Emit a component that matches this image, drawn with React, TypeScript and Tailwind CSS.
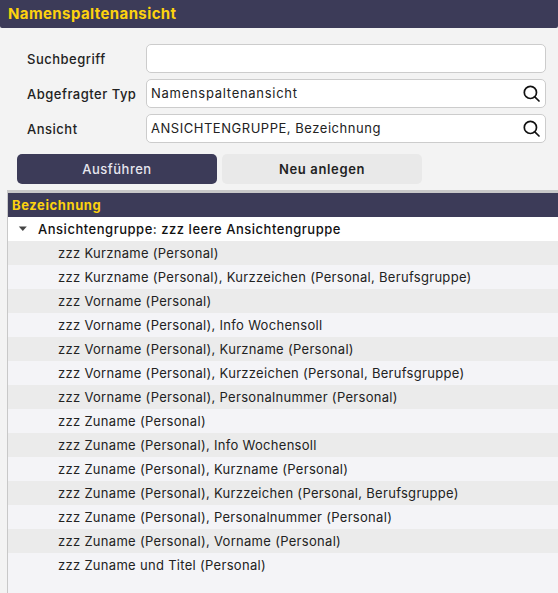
const rows = [
  "zzz Kurzname (Personal)",
  "zzz Kurzname (Personal), Kurzzeichen (Personal, Berufsgruppe)",
  "zzz Vorname (Personal)",
  "zzz Vorname (Personal), Info Wochensoll",
  "zzz Vorname (Personal), Kurzname (Personal)",
  "zzz Vorname (Personal), Kurzzeichen (Personal, Berufsgruppe)",
  "zzz Vorname (Personal), Personalnummer (Personal)",
  "zzz Zuname (Personal)",
  "zzz Zuname (Personal), Info Wochensoll",
  "zzz Zuname (Personal), Kurzname (Personal)",
  "zzz Zuname (Personal), Kurzzeichen (Personal, Berufsgruppe)",
  "zzz Zuname (Personal), Personalnummer (Personal)",
  "zzz Zuname (Personal), Vorname (Personal)",
  "zzz Zuname und Titel (Personal)",
];

function Field({ label, value, valueClass, icon }: { label: string; value?: string; valueClass?: string; icon?: boolean }) {
  return (
    <div className="flex items-center h-[29.33px]">
      <div className="w-[119px] pt-[2px] text-[13px] font-medium text-[#222] tracking-[0.5px]">{label}</div>
      <div className={`w-[400px] h-[29.33px] rounded-[5px] border border-[#ccc] bg-white flex items-center justify-between pl-[4px] pr-[5px] text-[13px] text-[#222] ${valueClass ?? ""}`}>
        <span className="pt-[1px]">{value}</span>
        {icon && (
          <svg width="17" height="17" viewBox="0 0 17 17" fill="none" stroke="#111" strokeWidth="1.7" strokeLinecap="round">
            <circle cx="7.4" cy="7.4" r="6.1" />
            <path d="M11.8 11.8 L16 16" />
          </svg>
        )}
      </div>
    </div>
  );
}

export default function App() {
  return (
    <div className="w-[558px] h-[593px] overflow-hidden bg-[#f3f3f3] font-['Inter',sans-serif]">
      <div className="h-[28px] bg-[#3c3b58] rounded-b-[2px] pl-[8px] flex items-center text-[15px] font-bold text-[#fdd20e] tracking-[0.4px]">
        Namenspaltenansicht
      </div>
      <div className="pl-[27px] pt-[16px] flex flex-col gap-[5.67px]">
        <Field label="Suchbegriff" />
        <Field label="Abgefragter Typ" value="Namenspaltenansicht" valueClass="tracking-[0.72px]" icon />
        <Field label="Ansicht" value="ANSICHTENGRUPPE, Bezeichnung" valueClass="tracking-[0.53px]" icon />
      </div>
      <div className="pl-[17px] pt-[10.67px] flex gap-[5px] text-[13px] font-medium">
        <div className="w-[200px] h-[30px] pt-[2px] rounded-[5px] bg-[#3c3b58] text-[#e6e6ee] flex items-center justify-center tracking-[0.5px]">Ausführen</div>
        <div className="w-[200px] h-[30px] pt-[2px] rounded-[5px] bg-[#e9e9e9] text-[#222] flex items-center justify-center font-semibold tracking-[0.65px]">Neu anlegen</div>
      </div>
      <div className="ml-[7px] mt-[6px] border-t-[3px] border-t-[#c8c8c8] border-l border-l-[#c8c8c8] bg-[#f4f4f7] h-[403px]">
        <div className="h-[24px] bg-[#3c3b58] pl-[4px] pt-[2px] flex items-center text-[13px] font-bold text-[#fdd20e] tracking-[0.6px]">Bezeichnung</div>
        <div className="h-[24px] bg-white pt-[1px] flex items-center text-[13px] font-medium text-[#111] tracking-[0.52px]">
          <svg width="10" height="6" viewBox="0 0 10 6" className="ml-[10px] mr-[10px]"><path d="M0.8 0.5h8L4.8 5z" fill="#444" /></svg>
          Ansichtengruppe: zzz leere Ansichtengruppe
        </div>
        {rows.map((r, i) => (
          <div key={r} className={`h-[24px] pt-[2px] flex items-center pl-[50px] text-[13px] text-[#222] tracking-[0.3px] ${i % 2 === 0 ? "bg-[#ebebeb]" : "bg-[#f4f4f7]"}`}>
            {r}
          </div>
        ))}
      </div>
    </div>
  );
}
